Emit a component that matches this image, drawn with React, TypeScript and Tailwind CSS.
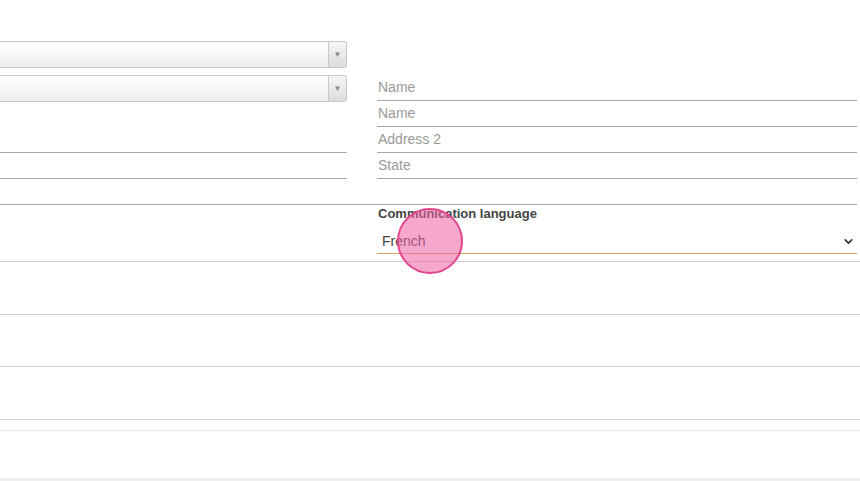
import { ChevronDown } from 'lucide-react';

const RIGHT_FIELDS = ['Name', 'Name', 'Address 2', 'State'];

function LegacySelect() {
  return (
    <div className="flex h-[27px] rounded-r-[3px] border border-l-0 border-[#c8c8c8] bg-gradient-to-b from-white to-[#ededed]">
      <div className="flex-1" />
      <div className="flex w-[18px] items-center justify-center rounded-r-[3px] border-l border-[#c8c8c8] bg-gradient-to-b from-[#f6f6f6] to-[#dcdcdc]">
        <span className="text-[8px] leading-none text-[#888]">▼</span>
      </div>
    </div>
  );
}

function LineField({ placeholder }: { placeholder?: string }) {
  return (
    <div className="flex h-[26px] items-center border-b border-[#a8a8a8]">
      {placeholder && <span className="pl-px text-[14px] text-[#999]">{placeholder}</span>}
    </div>
  );
}

export default function App() {
  return (
    <div
      className="relative h-[481px] w-[860px] overflow-hidden bg-white"
      style={{ fontFamily: '"Liberation Sans", Arial, sans-serif' }}
    >
      <div className="w-[857px]">
        <div className="grid grid-cols-[347px_480px] gap-x-[30px] pt-[41px]">
          <div className="flex flex-col">
            <LegacySelect />
            <div className="mt-[7px]">
              <LegacySelect />
            </div>
            <div className="mt-[25px]">
              <LineField />
              <LineField />
            </div>
          </div>
          <div className="mt-[34px] flex flex-col">
            {RIGHT_FIELDS.map((f, i) => (
              <LineField key={i} placeholder={f} />
            ))}
          </div>
        </div>
        <div className="h-[26px] border-b border-[#a8a8a8]" />
      </div>

      <div className="border-b border-[#cfcfcf] pb-[7px]">
        <div className="grid w-[857px] grid-cols-[347px_480px] gap-x-[30px]">
          <div />
          <div className="flex flex-col">
            <div className="mt-px h-[16px] pl-px text-[13px] font-bold leading-[16px] text-[#444]">
              Communication language
            </div>
            <div className="mt-[7px] flex h-[25px] items-center justify-between border-b border-[#d9a35c] pl-[5px] pr-[2px]">
              <span className="text-[14px] text-[#444]">French</span>
              <ChevronDown size={13} strokeWidth={3} className="text-[#333]" />
            </div>
          </div>
        </div>
      </div>

      <div className="h-[53px] border-b border-[#cfcfcf]" />
      <div className="h-[52px] border-b border-[#cfcfcf]" />
      <div className="h-[53px] border-b border-[#cfcfcf]" />
      <div className="h-[11px] border-b border-[#e6e6e6]" />
      <div className="h-[47px]" />
      <div className="h-[3px] bg-[#efefef]" />

      <div className="absolute left-[397px] top-[208px] h-[66px] w-[66px] rounded-full border-[2px] border-[#e2448e] bg-[#ef5fa3]/55" />
    </div>
  );
}
